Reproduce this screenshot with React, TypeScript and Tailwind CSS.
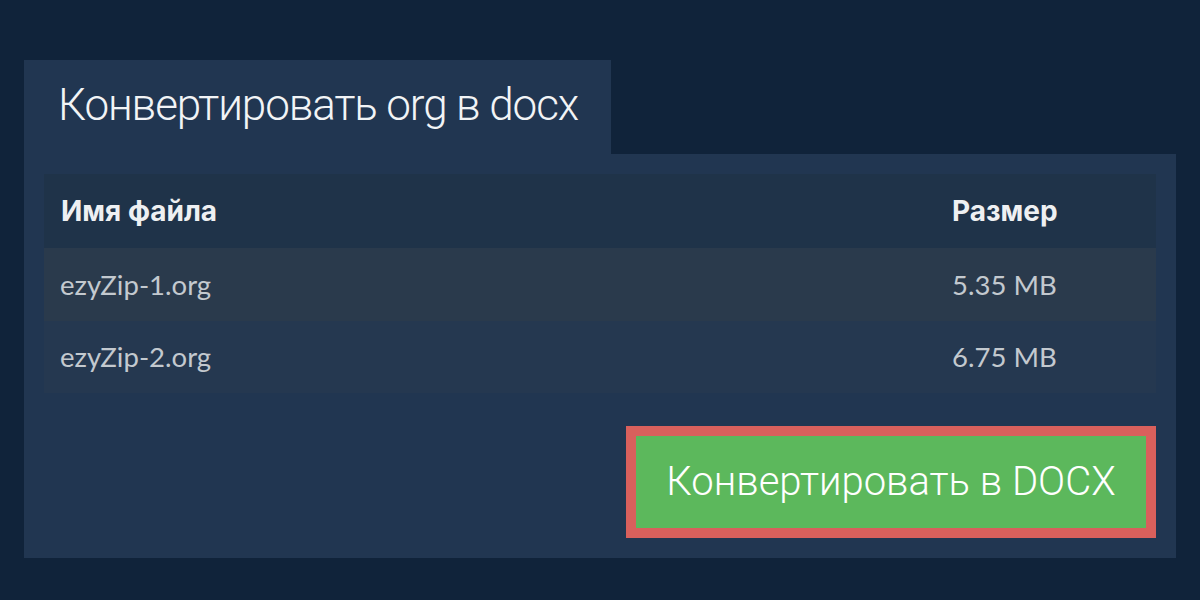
const rows = [
  { name: "ezyZip-1.org", size: "5.35 MB", cls: "h-[73px] bg-[#2a3a4c]" },
  { name: "ezyZip-2.org", size: "6.75 MB", cls: "h-[72px] bg-[#253850]" },
];

export default function App() {
  return (
    <div className="w-full h-[600px] bg-[#10233a] pt-[60px] px-6">
      <div className="w-[587px] h-[94px] bg-[#213651] pl-[34px] flex items-center">
        <h1 className="font-['Roboto','Noto_Sans',sans-serif] text-[44px] font-light text-[#f2f4f6] leading-none pb-1 tracking-[-1.1px]">
          Конвертировать org в docx
        </h1>
      </div>
      <div className="bg-[#213651] p-5 flex flex-col">
        <div>
          <div className="grid grid-cols-[891px_1fr] h-[74px] items-center px-[17px] bg-[#1f3349] text-[#eef0f2] text-[28px] font-bold font-['Inter','Noto_Sans',sans-serif]">
            <div>Имя файла</div>
            <div>Размер</div>
          </div>
          {rows.map((r) => (
            <div
              key={r.name}
              className={`grid grid-cols-[892px_1fr] items-center px-4 text-[#c3c9cf] text-[27.5px] font-['Lato','Noto_Sans',sans-serif] ${r.cls}`}
            >
              <div>{r.name}</div>
              <div>{r.size}</div>
            </div>
          ))}
        </div>
        <button className="self-end mt-[33px] w-[530px] h-[112px] border-[10px] border-[#d9605c] bg-[#5cb85c] text-white text-[40px] font-light flex items-center justify-center font-['Roboto','Noto_Sans',sans-serif]">
          Конвертировать в DOCX
        </button>
      </div>
    </div>
  );
}
